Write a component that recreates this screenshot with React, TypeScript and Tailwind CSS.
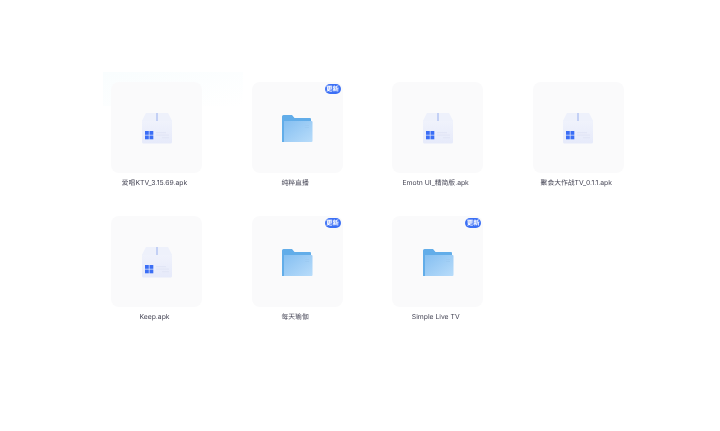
const items = [
  { name: "爱唱KTV_3.15.69.apk", kind: "apk" },
  { name: "纯粹直播", kind: "folder" },
  { name: "Emotn UI_精简版.apk", kind: "apk" },
  { name: "聚会大作战TV_0.1.1.apk", kind: "apk" },
  { name: "Keep.apk", kind: "apk" },
  { name: "每天瑜伽", kind: "folder" },
  { name: "Simple Live TV", kind: "folder" },
];

function ApkIcon() {
  return (
    <svg width="32" height="32" viewBox="0 0 32 32" fill="none">
      <defs>
        <linearGradient id="box" x1="0" y1="0" x2="0" y2="1">
          <stop offset="0" stopColor="#f3f5fc" />
          <stop offset="1" stopColor="#e6eafa" />
        </linearGradient>
      </defs>
      <path d="M5 1h22l4 8v21a1.500 1.500 0 0 1-1.500 1.500h-27A1.500 1.500 0 0 1 1 30V9z" fill="url(#box)" />
      <path d="M1 9 5 1h22l4 8z" fill="#eef1fb" />
      <rect x="15" y="1" width="2" height="8" fill="#c3d0f5" />
      <rect x="4" y="19" width="3.800" height="3.800" fill="#3b6ef5" />
      <rect x="8.500" y="19" width="3.800" height="3.800" fill="#3b6ef5" />
      <rect x="4" y="23.500" width="3.800" height="3.800" fill="#3b6ef5" />
      <rect x="8.500" y="23.500" width="3.800" height="3.800" fill="#3b6ef5" />
      <rect x="15" y="20" width="10" height="1.200" fill="#e2e6f6" />
      <rect x="15" y="22.500" width="13" height="1.200" fill="#e2e6f6" />
      <rect x="21" y="25" width="7" height="1.200" fill="#e2e6f6" />
    </svg>
  );
}

function FolderIcon() {
  return (
    <svg width="32" height="30" viewBox="0 0 32 30" fill="none">
      <defs>
        <linearGradient id="front" x1="0" y1="0" x2="1" y2="1">
          <stop offset="0" stopColor="#85bff1" />
          <stop offset="1" stopColor="#b8dcfa" />
        </linearGradient>
      </defs>
      <path d="M1 3.500A1.500 1.500 0 0 1 2.500 2h8.500l2.500 3H29a1 1 0 0 1 1 1v4H1z" fill="#62ade9" />
      <rect x="1" y="5" width="4" height="24" fill="#62ade9" />
      <path d="M3 8h27.500a1 1 0 0 1 1 1v19a1 1 0 0 1-1 1H3z" fill="url(#front)" />
      <rect x="24" y="12" width="4" height="1" fill="#9ccaf2" />
      <rect x="24" y="14" width="4" height="1" fill="#9ccaf2" />
    </svg>
  );
}

export default function App() {
  return (
    <div className="relative w-[720px] h-[431px] bg-white overflow-hidden blur-[0.3px] [text-rendering:geometricPrecision] font-['Inter','Noto_Sans_CJK_SC',sans-serif]">
      <div className="absolute left-[103px] top-[72px] w-[140px] h-[34px] bg-gradient-to-br from-[#f9fdfe] to-white" />
      <div className="relative grid grid-cols-[repeat(4,91px)] gap-x-[49.600px] gap-y-[26px] pl-[111px] pt-[82px]">
        {items.map((item) => (
          <div key={item.name} className="flex flex-col">
            <div className="relative h-[91px] rounded-lg bg-[#fafafb] flex items-center justify-center">
              {item.kind === "apk" ? <ApkIcon /> : <FolderIcon />}
              {item.kind === "folder" && (
                <span className="absolute right-[2px] top-[2px] h-[10px] w-[16px] rounded-full bg-[#3b6ff5] text-white text-[6.500px] leading-[10px] font-semibold text-center">
                  更新
                </span>
              )}
            </div>
            <div className="mt-[3px] h-[14px] w-[87px] flex justify-center whitespace-nowrap text-[6.800px] leading-[14px] text-[#454555]">
              {item.name}
            </div>
          </div>
        ))}
      </div>
    </div>
  );
}
